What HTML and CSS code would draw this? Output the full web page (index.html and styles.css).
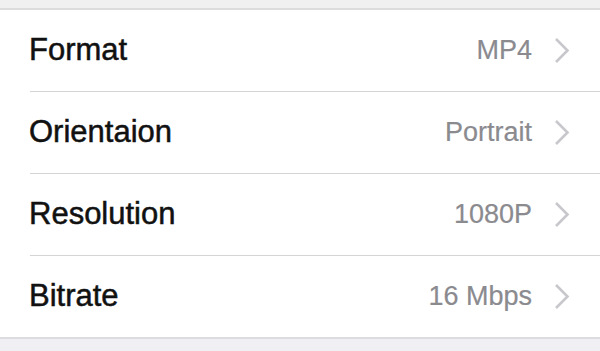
FILE: index.html
```html
<!DOCTYPE html>
<html>
<head>
<meta charset="utf-8">
<link rel="stylesheet" href="styles.css">
</head>
<body>
<div class="top"></div>
<div class="list">
  <div class="row">
    <span class="label">Format</span>
    <span class="value">MP4</span>
    <svg class="chev" width="16" height="27" viewBox="0 0 16 27"><path d="M2 2 L13.5 13.5 L2 25" fill="none" stroke="#c7c7cc" stroke-width="2.6"/></svg>
  </div>
  <div class="row">
    <span class="label">Orientaion</span>
    <span class="value">Portrait</span>
    <svg class="chev" width="16" height="27" viewBox="0 0 16 27"><path d="M2 2 L13.5 13.5 L2 25" fill="none" stroke="#c7c7cc" stroke-width="2.6"/></svg>
  </div>
  <div class="row">
    <span class="label">Resolution</span>
    <span class="value">1080P</span>
    <svg class="chev" width="16" height="27" viewBox="0 0 16 27"><path d="M2 2 L13.5 13.5 L2 25" fill="none" stroke="#c7c7cc" stroke-width="2.6"/></svg>
  </div>
  <div class="row">
    <span class="label">Bitrate</span>
    <span class="value">16 Mbps</span>
    <svg class="chev" width="16" height="27" viewBox="0 0 16 27"><path d="M2 2 L13.5 13.5 L2 25" fill="none" stroke="#c7c7cc" stroke-width="2.6"/></svg>
  </div>
</div>
</body>
</html>
```
FILE: styles.css
```css
html, body {
  margin: 0;
  padding: 0;
  background: #efeff4;
  font-family: "Liberation Sans", Arial, sans-serif;
}
.top {
  height: 8px;
  background: #f0f0f0;
}
.list {
  background: #fff;
  border-top: 2px solid #dcdcdc;
  border-bottom: 2px solid #dcdce0;
}
.row {
  display: flex;
  align-items: center;
  height: 81px;
  margin-left: 30px;
  padding-right: 30px;
  border-bottom: 1px solid #d4d4d6;
}
.row:last-child {
  border-bottom: none;
}
.label {
  flex: 1;
  font-size: 31px;
  color: #111;
  -webkit-text-stroke: 0.5px #111;
  margin-left: -1px;
  padding-bottom: 2px;
}
.value {
  font-size: 27px;
  color: #8a8a8f;
  -webkit-text-stroke: 0.2px #8a8a8f;
  margin-right: 22px;
  padding-bottom: 1px;
}
.chev {
  display: block;
}
```
